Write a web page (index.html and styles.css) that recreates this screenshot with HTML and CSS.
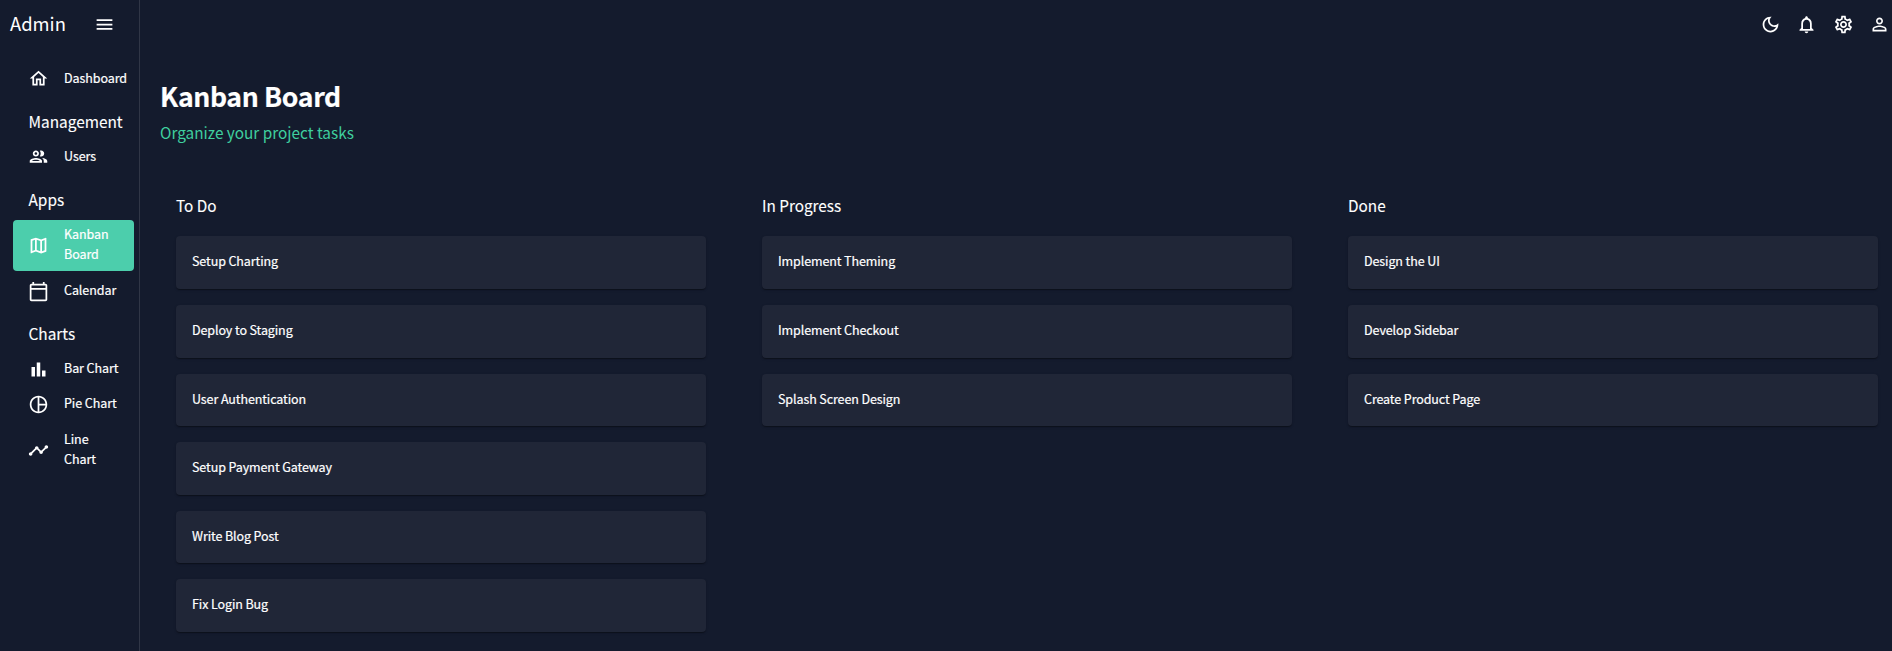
FILE: index.html
```
<!DOCTYPE html>
<html lang="en">
<head>
<meta charset="utf-8">
<title>Kanban Board</title>
<link rel="stylesheet" href="styles.css">
</head>
<body>
<div class="app">
  <aside class="sidebar">
    <div class="brand">
      <span class="brand-name">Admin</span>
      <svg class="icon" viewBox="0 0 24 24"><path d="M3 18h18v-2H3v2zm0-5h18v-2H3v2zm0-7v2h18V6H3z"/></svg>
    </div>
    <nav class="menu">
      <a class="item"><svg class="icon" viewBox="0 0 24 24"><path d="m12 5.69 5 4.5V18h-2v-6H9v6H7v-7.81l5-4.5M12 3 2 12h3v8h6v-6h2v6h6v-8h3L12 3z"/></svg><span class="label">Dashboard</span></a>
      <h6 class="group">Management</h6>
      <a class="item"><svg class="icon" viewBox="0 0 24 24"><path d="M9 13.75c-2.34 0-7 1.17-7 3.5V19h14v-1.75c0-2.33-4.66-3.5-7-3.5zM4.34 17c.84-.58 2.87-1.25 4.66-1.25s3.82.67 4.66 1.25H4.34zM9 12c1.93 0 3.5-1.57 3.5-3.5S10.93 5 9 5 5.500 6.570 5.500 8.500 7.070 12 9 12zm0-5c.83 0 1.500.67 1.500 1.500S9.830 10 9 10s-1.500-.67-1.500-1.500S8.170 7 9 7zm7.040 6.810c1.160.84 1.960 1.960 1.960 3.440V19h4v-1.750c0-2.020-3.500-3.170-5.960-3.440zM15 12c1.930 0 3.500-1.570 3.500-3.500S16.930 5 15 5c-.54 0-1.040.13-1.500.35.63.89 1 1.980 1 3.150s-.37 2.260-1 3.150c.46.22.96.35 1.500.35z"/></svg><span class="label">Users</span></a>
      <h6 class="group">Apps</h6>
      <a class="item active"><svg class="icon" viewBox="0 0 24 24"><path d="m20.500 3-.16.03L15 5.100 9 3 3.360 4.900c-.21.07-.36.25-.36.48V20.500c0 .28.22.5.5.5l.16-.03L9 18.900l6 2.100 5.640-1.900c.21-.07.36-.25.36-.48V3.500c0-.28-.22-.5-.5-.5zM10 5.470l4 1.400v11.660l-4-1.400V5.470zm-5 .99 3-1.010v11.700l-3 1.160V6.460zm14 11.080-3 1.010V6.860l3-1.160v11.840z"/></svg><span class="label">Kanban Board</span></a>
      <a class="item"><svg class="icon" viewBox="0 0 24 24"><path d="M20 3h-1V1h-2v2H7V1H5v2H4c-1.100 0-2 .9-2 2v16c0 1.100.9 2 2 2h16c1.100 0 2-.9 2-2V5c0-1.100-.9-2-2-2zm0 18H4V10h16v11zm0-13H4V5h16v3z"/></svg><span class="label">Calendar</span></a>
      <h6 class="group charts">Charts</h6>
      <a class="item"><svg class="icon" viewBox="0 0 24 24"><path d="M4 9h4v11H4zm12 4h4v7h-4zm-6-9h4v16h-4z"/></svg><span class="label">Bar Chart</span></a>
      <a class="item"><svg class="icon" viewBox="0 0 24 24"><path d="M12 2C6.480 2 2 6.480 2 12s4.480 10 10 10 10-4.480 10-10S17.520 2 12 2zm1 2.070c3.610.45 6.480 3.330 6.930 6.930H13V4.070zM4 12c0-4.060 3.070-7.440 7-7.930v15.870c-3.930-.5-7-3.880-7-7.940zm9 7.930V13h6.930c-.45 3.610-3.320 6.480-6.930 6.930z"/></svg><span class="label">Pie Chart</span></a>
      <a class="item tall"><svg class="icon" viewBox="0 0 24 24"><path d="M23 8c0 1.100-.9 2-2 2-.18 0-.35-.02-.51-.07l-3.560 3.550c.05.16.07.34.07.52 0 1.100-.9 2-2 2s-2-.9-2-2c0-.18.02-.36.07-.52l-2.550-2.550c-.16.05-.34.07-.52.07s-.36-.02-.52-.07l-4.550 4.560c.05.16.07.33.07.51 0 1.100-.9 2-2 2s-2-.9-2-2 .9-2 2-2c.18 0 .35.02.51.07l4.560-4.550C8.020 9.360 8 9.180 8 9c0-1.100.9-2 2-2s2 .9 2 2c0 .18-.02.36-.07.52l2.550 2.550c.16-.05.34-.07.52-.07s.36.02.52.07l3.550-3.560C19.020 8.350 19 8.180 19 8c0-1.100.9-2 2-2s2 .9 2 2z"/></svg><span class="label">Line Chart</span></a>
    </nav>
  </aside>
  <main class="main">
    <header class="topbar">
      <svg class="icon" viewBox="0 0 24 24"><path d="M9.370 5.510c-.18.64-.27 1.310-.27 1.990 0 4.080 3.320 7.400 7.400 7.400.68 0 1.350-.09 1.990-.27C17.450 17.190 14.930 19 12 19c-3.860 0-7-3.140-7-7 0-2.930 1.810-5.450 4.370-6.490zM12 3c-4.970 0-9 4.030-9 9s4.030 9 9 9 9-4.030 9-9c0-.46-.04-.92-.1-1.360-.98 1.370-2.580 2.260-4.400 2.260-2.980 0-5.400-2.420-5.400-5.400 0-1.810.89-3.420 2.260-4.400-.44-.06-.9-.1-1.360-.1z"/></svg>
      <svg class="icon" viewBox="0 0 24 24"><path d="M12 22c1.100 0 2-.9 2-2h-4c0 1.100.9 2 2 2zm6-6v-5c0-3.070-1.630-5.640-4.500-6.320V4c0-.83-.67-1.500-1.500-1.500s-1.500.67-1.500 1.500v.68C7.640 5.360 6 7.920 6 11v5l-2 2v1h16v-1l-2-2zm-2 1H8v-6c0-2.480 1.510-4.500 4-4.500s4 2.020 4 4.500v6z"/></svg>
      <svg class="icon" viewBox="0 0 24 24"><path d="M19.430 12.980c.04-.32.07-.64.07-.98 0-.34-.03-.66-.07-.98l2.110-1.650c.19-.15.24-.42.12-.64l-2-3.460c-.09-.16-.26-.25-.44-.25-.06 0-.12.010-.17.03l-2.490 1c-.52-.4-1.080-.73-1.690-.98l-.38-2.650C14.460 2.180 14.250 2 14 2h-4c-.25 0-.46.18-.49.42l-.38 2.650c-.61.25-1.170.59-1.690.98l-2.490-1c-.06-.02-.12-.03-.18-.03-.17 0-.34.09-.43.25l-2 3.460c-.13.22-.07.49.12.64l2.110 1.650c-.04.32-.07.65-.07.98 0 .33.03.66.07.98l-2.110 1.650c-.19.15-.24.42-.12.64l2 3.460c.09.16.26.25.44.25.06 0 .12-.01.17-.03l2.490-1c.52.4 1.080.73 1.690.98l.38 2.650c.03.24.24.42.49.42h4c.25 0 .46-.18.49-.42l.38-2.650c.61-.25 1.170-.59 1.690-.98l2.490 1c.06.02.12.03.18.03.17 0 .34-.09.43-.25l2-3.460c.12-.22.07-.49-.12-.64l-2.110-1.650zm-1.980-1.710c.04.31.05.52.05.73 0 .21-.02.43-.05.73l-.14 1.130.89.7 1.080.84-.7 1.210-1.270-.51-1.040-.42-.9.68c-.43.32-.84.56-1.250.73l-1.060.43-.16 1.130-.2 1.350h-1.400l-.19-1.350-.16-1.130-1.060-.43c-.43-.18-.83-.41-1.230-.71l-.91-.7-1.060.43-1.270.51-.7-1.210 1.080-.84.89-.7-.14-1.130c-.03-.31-.05-.54-.05-.74s.02-.43.05-.73l.14-1.130-.89-.7-1.080-.84.7-1.210 1.270.51 1.040.42.9-.68c.43-.32.84-.56 1.250-.73l1.060-.43.16-1.130.2-1.350h1.390l.19 1.350.16 1.130 1.060.43c.43.18.83.41 1.230.71l.91.7 1.060-.43 1.270-.51.7 1.210-1.070.85-.89.7.14 1.130zM12 8c-2.210 0-4 1.790-4 4s1.790 4 4 4 4-1.790 4-4-1.790-4-4-4zm0 6c-1.100 0-2-.9-2-2s.9-2 2-2 2 .9 2 2-.9 2-2 2z"/></svg>
      <svg class="icon" viewBox="0 0 24 24"><path d="M12 5.900c1.160 0 2.100.94 2.100 2.100s-.94 2.100-2.100 2.100S9.900 9.160 9.900 8s.94-2.100 2.100-2.100m0 9c2.970 0 6.100 1.460 6.100 2.100v1.100H5.900V17c0-.64 3.130-2.100 6.100-2.100M12 4C9.790 4 8 5.790 8 8s1.790 4 4 4 4-1.790 4-4-1.790-4-4-4zm0 9c-2.670 0-8 1.340-8 4v3h16v-3c0-2.660-5.330-4-8-4z"/></svg>
    </header>
    <section class="page">
      <h2 class="title">Kanban Board</h2>
      <h5 class="subtitle">Organize your project tasks</h5>
      <div class="board">
        <div class="column">
          <h6 class="column-title">To Do</h6>
          <div class="card">Setup Charting</div>
          <div class="card">Deploy to Staging</div>
          <div class="card">User Authentication</div>
          <div class="card">Setup Payment Gateway</div>
          <div class="card">Write Blog Post</div>
          <div class="card">Fix Login Bug</div>
        </div>
        <div class="column">
          <h6 class="column-title">In Progress</h6>
          <div class="card">Implement Theming</div>
          <div class="card">Implement Checkout</div>
          <div class="card">Splash Screen Design</div>
        </div>
        <div class="column">
          <h6 class="column-title">Done</h6>
          <div class="card">Design the UI</div>
          <div class="card">Develop Sidebar</div>
          <div class="card">Create Product Page</div>
        </div>
      </div>
    </section>
  </main>
</div>
</body>
</html>
```
FILE: styles.css
```
* { box-sizing: border-box; }
body {
  margin: 0;
  background: #141b2d;
  color: #fff;
  font-family: "Noto Sans CJK SC", "Noto Sans", sans-serif;
  font-size: 12.5px;
  -webkit-text-stroke: 0.2px currentColor;
  overflow: hidden;
}
h2, h5, h6 { margin: 0; font-weight: 400; }
.app { display: flex; height: 651px; }
.icon { width: 21px; height: 21px; fill: currentColor; flex: none; display: block; }

.sidebar { width: 140px; flex: none; border-right: 1px solid #303646; }
.brand { display: flex; align-items: center; height: 48px; padding-left: 10px; }
.brand-name { width: 83.5px; font-size: 18.4px; line-height: 28px; padding-bottom: 2px; -webkit-text-stroke-width: 0; }
.menu { padding: 15.4px 5px 0 13px; }
.item {
  display: flex;
  align-items: center;
  gap: 15.5px;
  height: 31px;
  padding: 5px 14px 5px 14.5px;
  margin-bottom: 4px;
  border-radius: 4px;
}
.item .icon { margin: -5px 0; }
.label { flex: 1; min-width: 0; line-height: 20px; margin: -1px 0 1px; letter-spacing: -0.07px; }
.group { height: 43px; margin-top: -4px; margin-bottom: 4px; padding: 15.6px 0 0 15.5px; font-size: 15.4px; line-height: 23px; -webkit-text-stroke-width: 0.1px; }
.item.active { background: #4cceac; height: 51px; margin-top: 4.6px; margin-bottom: 4.6px; }
.active .label { margin: -1px 0 1px; }
.group.charts { padding-top: 15.4px; }
.item.tall { height: 53px; }

.main { flex: 1; min-width: 0; }
.topbar { display: flex; justify-content: flex-end; align-items: center; gap: 15.4px; height: 48px; padding-right: 2px; }
.page { padding: 27px 0 0 20px; }
.title { font-size: 26.6px; font-weight: 700; line-height: 42px; letter-spacing: -0.35px; }
.subtitle { font-size: 15.35px; line-height: 30px; color: #3fcf9f; -webkit-text-stroke-width: 0; }
.board { display: grid; grid-template-columns: repeat(3, 562px); gap: 24px; margin-top: 25px; padding-top: 18px; }
.column { display: flex; flex-direction: column; gap: 16px; padding: 0 16px; }
.column-title { font-size: 15.3px; line-height: 30.4px; -webkit-text-stroke-width: 0.1px; }
.card {
  height: 52.6px;
  padding: 0 16px;
  line-height: 50px;
  letter-spacing: -0.1px;
  background: #202637;
  border-radius: 4px;
  box-shadow: 0 2px 1px -1px rgba(0,0,0,.2), 0 1px 1px rgba(0,0,0,.14), 0 1px 3px rgba(0,0,0,.12);
}
```
